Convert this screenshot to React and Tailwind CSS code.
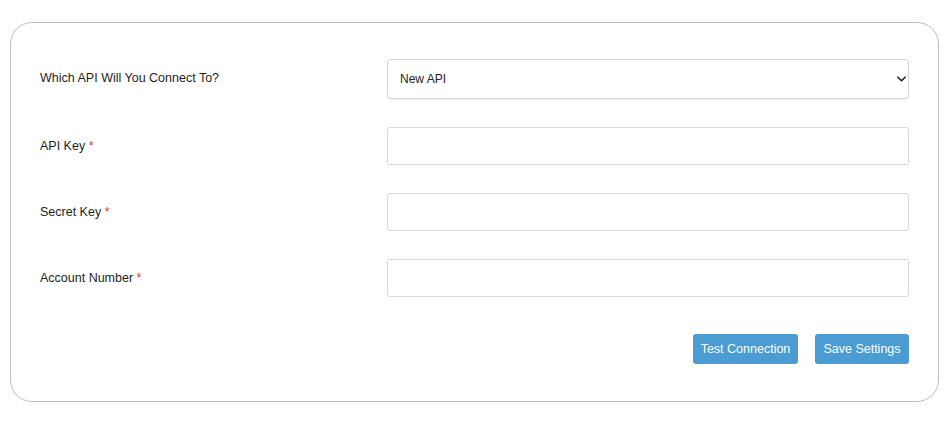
export default function App() {
  const fields = ["API Key", "Secret Key", "Account Number"];

  return (
    <div className="w-[950px] h-[430px] bg-white pt-[22px] pl-[10px] font-['Liberation_Sans',Arial,sans-serif] text-[#1e1e1e]">
      <div className="w-[929px] h-[380px] border border-[#bdbdbd] rounded-[22px] pt-[36px] pl-[29px] pr-[29px]">
        <div className="flex items-center h-[40px]">
          <label className="w-[347px] text-[12.5px] -mt-[1px]">Which API Will You Connect To?</label>
          <div className="relative flex-1">
            <select className="w-full h-[40px] appearance-none border border-[#d6d6d6] rounded-[4px] bg-white pl-[12px] text-[12px] text-[#222] shadow-[0_1px_2px_rgba(0,0,0,0.08)] outline-none">
              <option>New API</option>
            </select>
            <svg
              viewBox="0 0 10 6"
              className="absolute right-[3px] top-[17px] w-[9px] h-[6px] pointer-events-none"
            >
              <path d="M1 1l4 4 4-4" fill="none" stroke="#222" strokeWidth="1.8" strokeLinecap="round" strokeLinejoin="round" />
            </svg>
          </div>
        </div>

        {fields.map((name) => (
          <div key={name} className="flex items-center h-[38px] mt-[28px]">
            <label className="w-[347px] text-[12.5px]">
              {name} <span className="text-[#e3342f]">*</span>
            </label>
            <input
              type="text"
              className="flex-1 h-[38px] border border-[#dadada] rounded-[3px] bg-white outline-none px-3 text-[13px]"
            />
          </div>
        ))}

        <div className="flex justify-end gap-[17px] mt-[37px]">
          <button className="h-[30px] w-[105px] rounded-[3px] bg-[#4a9cd3] text-white text-[12.5px]">
            Test Connection
          </button>
          <button className="h-[30px] w-[94px] rounded-[3px] bg-[#4a9cd3] text-white text-[12.5px]">
            Save Settings
          </button>
        </div>
      </div>
    </div>
  );
}
